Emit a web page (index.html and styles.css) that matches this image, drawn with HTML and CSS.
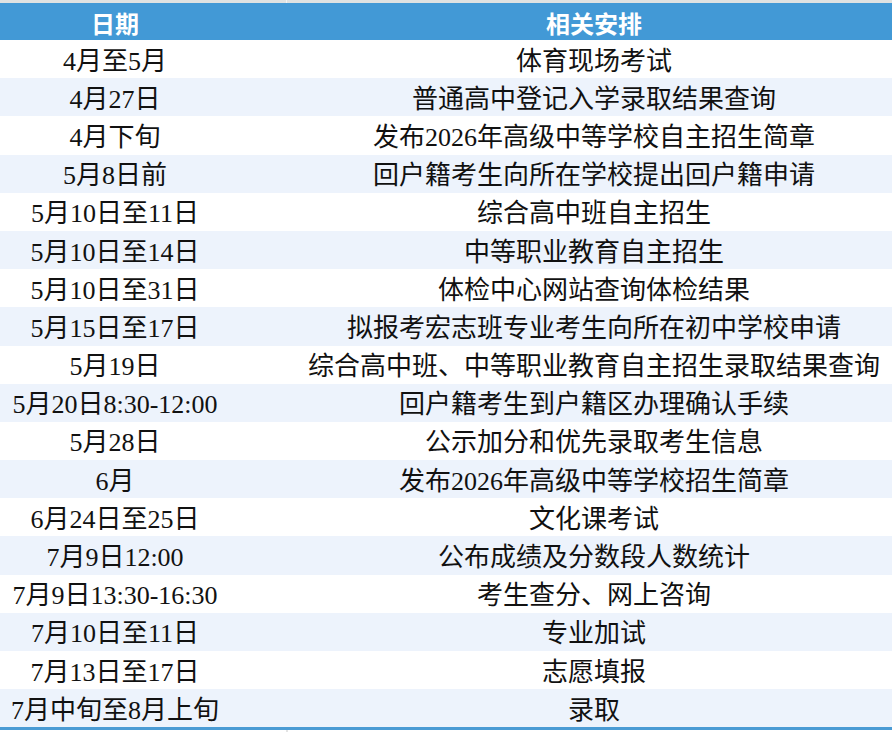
FILE: index.html
```html
<!DOCTYPE html>
<html lang="zh-CN">
<head>
<meta charset="utf-8">
<link rel="stylesheet" href="styles.css">
</head>
<body>
<div class="topstrip"><span class="seg a"></span><span class="seg b"></span></div>
<div class="table">
  <div class="row head"><div class="c1">日期</div><div class="c2">相关安排</div></div>
  <div class="row"><div class="c1">4月至5月</div><div class="c2">体育现场考试</div></div>
  <div class="row alt"><div class="c1">4月27日</div><div class="c2">普通高中登记入学录取结果查询</div></div>
  <div class="row"><div class="c1">4月下旬</div><div class="c2">发布2026年高级中等学校自主招生简章</div></div>
  <div class="row alt"><div class="c1">5月8日前</div><div class="c2">回户籍考生向所在学校提出回户籍申请</div></div>
  <div class="row"><div class="c1">5月10日至11日</div><div class="c2">综合高中班自主招生</div></div>
  <div class="row alt"><div class="c1">5月10日至14日</div><div class="c2">中等职业教育自主招生</div></div>
  <div class="row"><div class="c1">5月10日至31日</div><div class="c2">体检中心网站查询体检结果</div></div>
  <div class="row alt"><div class="c1">5月15日至17日</div><div class="c2">拟报考宏志班专业考生向所在初中学校申请</div></div>
  <div class="row"><div class="c1">5月19日</div><div class="c2">综合高中班、中等职业教育自主招生录取结果查询</div></div>
  <div class="row alt"><div class="c1">5月20日8:30-12:00</div><div class="c2">回户籍考生到户籍区办理确认手续</div></div>
  <div class="row"><div class="c1">5月28日</div><div class="c2">公示加分和优先录取考生信息</div></div>
  <div class="row alt"><div class="c1">6月</div><div class="c2">发布2026年高级中等学校招生简章</div></div>
  <div class="row"><div class="c1">6月24日至25日</div><div class="c2">文化课考试</div></div>
  <div class="row alt"><div class="c1">7月9日12:00</div><div class="c2">公布成绩及分数段人数统计</div></div>
  <div class="row"><div class="c1">7月9日13:30-16:30</div><div class="c2">考生查分、网上咨询</div></div>
  <div class="row alt"><div class="c1">7月10日至11日</div><div class="c2">专业加试</div></div>
  <div class="row"><div class="c1">7月13日至17日</div><div class="c2">志愿填报</div></div>
  <div class="row alt"><div class="c1">7月中旬至8月上旬</div><div class="c2">录取</div></div>
</div>
<div class="bottomstrip"><span class="seg a"></span><span class="seg b"></span></div>
</body>
</html>
```

FILE: styles.css
```css
html, body {
  margin: 0;
  padding: 0;
  background: #ffffff;
  width: 892px;
  height: 732px;
  overflow: hidden;
}
body {
  font-family: "Liberation Serif", "Noto Sans CJK SC", serif;
  color: #111111;
}
.topstrip {
  display: flex;
  height: 3px;
  background: #dfe2e2;
}
.topstrip .a {
  width: 286px;
  border-right: 1px solid #f2f3f3;
}
.table {
  display: flex;
  flex-direction: column;
  border-bottom: 3px solid #4a9bd4;
}
.row {
  display: grid;
  grid-template-columns: 230px 1fr;
  height: 38.2px;
  align-items: center;
  font-size: 26px;
  line-height: 32px;
  padding-top: 5px;
  box-sizing: border-box;
  white-space: nowrap;
}
.row.alt {
  background: #edf3fc;
}
.row.head {
  height: 37px;
  padding-top: 3px;
  background: #4299d6;
  color: #ffffff;
  font-weight: bold;
}
.row.head .c1, .row.head .c2 {
  font-family: "Noto Sans CJK SC", sans-serif;
  font-weight: bold;
  font-size: 24px;
}
.c1 {
  text-align: center;
}
.c2 {
  text-align: center;
  padding-left: 66px;
  overflow: visible;
}
.bottomstrip {
  display: flex;
  height: 6px;
}
.bottomstrip .a {
  width: 286px;
  border-right: 2px solid #e4e4e4;
}
```
